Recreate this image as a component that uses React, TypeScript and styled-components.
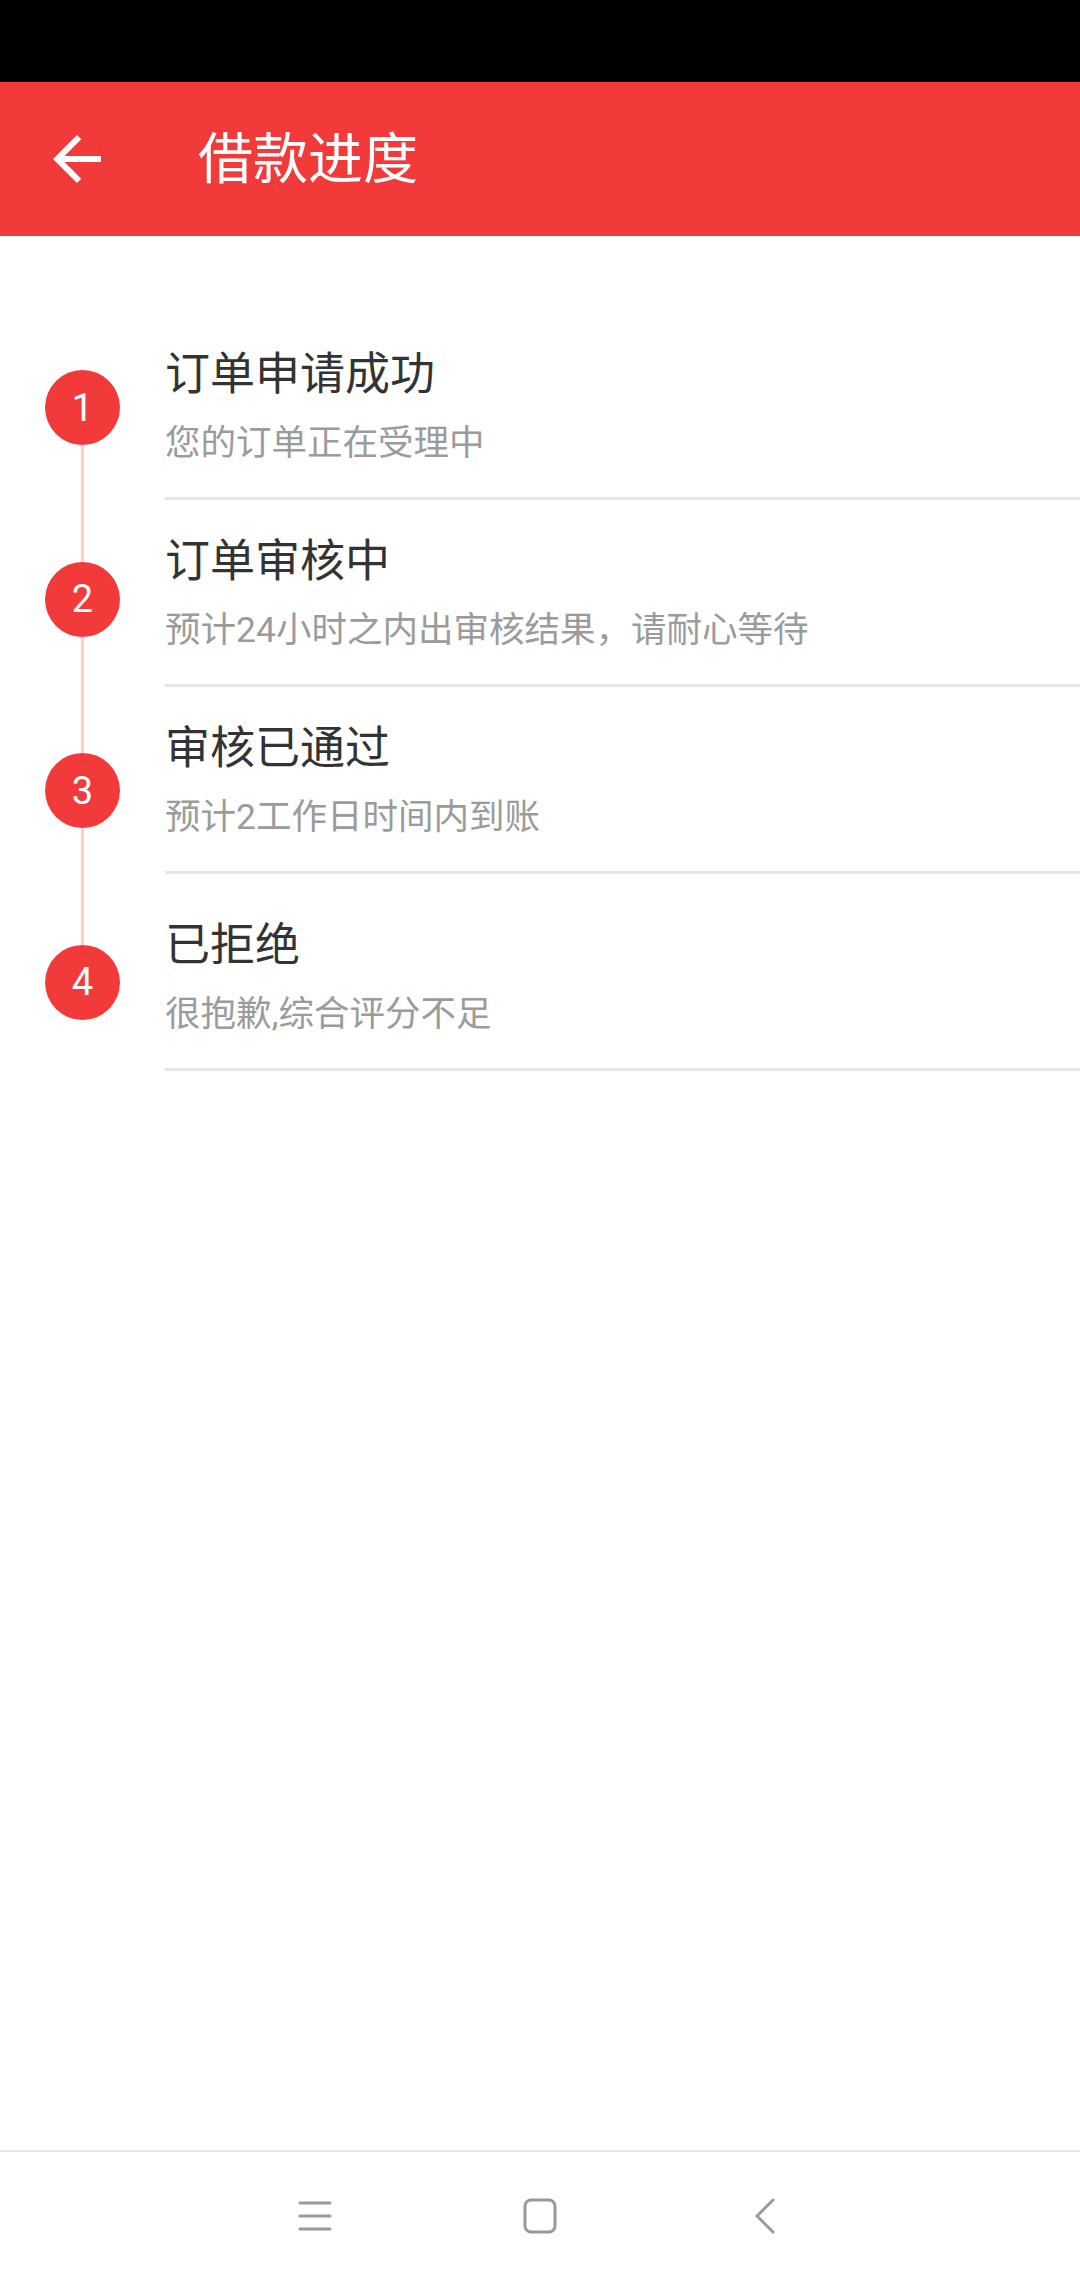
import * as React from 'react';
import styled, { createGlobalStyle } from 'styled-components';

// ========================
// Data
// ========================

interface IStep {
  title: string;
  desc: string;
}

const steps: IStep[] = [
  { title: '订单申请成功', desc: '您的订单正在受理中' },
  { title: '订单审核中', desc: '预计24小时之内出审核结果，请耐心等待' },
  { title: '审核已通过', desc: '预计2工作日时间内到账' },
  { title: '已拒绝', desc: '很抱歉,综合评分不足' },
];

const red = '#f23a3a';
const railColor = '#f9d3c3';

// ========================
// Components
// ========================

const GlobalStyle = createGlobalStyle`
  html, body {
    margin: 0;
    padding: 0;
    background: #ffffff;
  }
  body {
    font-family: Roboto, "Noto Sans CJK SC", "Noto Sans", sans-serif;
  }
`;

const Page = styled.div`
  width: 1080px;
  height: 2280px;
  display: flex;
  flex-direction: column;
  background: #ffffff;
  overflow: hidden;
`;

const StatusBar = styled.div`
  height: 82px;
  flex-shrink: 0;
  background: #000000;
`;

const Header = styled.header`
  height: 154px;
  flex-shrink: 0;
  display: flex;
  align-items: center;
  background: ${red};
  padding-left: 41px;
`;

const BackButton = styled.div`
  width: 72px;
  height: 72px;
  display: flex;
  align-items: center;
  justify-content: center;
`;

const HeaderTitle = styled.h1`
  margin: 0 0 0 85px;
  font-size: 55px;
  font-weight: 400;
  line-height: 1;
  color: #ffffff;
`;

const Content = styled.main`
  flex: 1;
  padding-top: 77px;
`;

const StepList = styled.ul`
  list-style: none;
  margin: 0;
  padding: 0;
`;

const StepRow = styled.li`
  display: flex;
`;

const Rail = styled.div`
  width: 165px;
  flex-shrink: 0;
  display: flex;
  flex-direction: column;
  align-items: center;
`;

const RailLine = styled.span<{ $hidden?: boolean; $height?: number }>`
  width: 3px;
  flex-shrink: 0;
  background: ${(p) => (p.$hidden ? 'transparent' : railColor)};
  ${(p) => (p.$height ? `height: ${p.$height}px;` : 'flex: 1;')}
`;

const StepBadge = styled.span`
  width: 75px;
  height: 75px;
  flex-shrink: 0;
  border-radius: 50%;
  background: ${red};
  color: #ffffff;
  font-size: 38px;
  display: flex;
  align-items: center;
  justify-content: center;
`;

const StepBody = styled.div<{ $top: number }>`
  flex: 1;
  padding: ${(p) => p.$top}px 0 32px;
  border-bottom: 3px solid #e8e8e8;
`;

const StepTitle = styled.div`
  font-size: 45px;
  line-height: 48px;
  color: #333333;
`;

const StepDesc = styled.div`
  margin-top: 22px;
  font-size: 35.5px;
  line-height: 44px;
  color: #9b9b9b;
`;

const NavBar = styled.nav`
  height: 128px;
  flex-shrink: 0;
  border-top: 2px solid #e8e8e8;
  display: flex;
  align-items: center;
  justify-content: center;
  gap: 165px;
`;

const NavKey = styled.div`
  width: 60px;
  height: 60px;
  display: flex;
  align-items: center;
  justify-content: center;
`;

// ========================
// Icons
// ========================

const ArrowBackIcon = () => (
  <svg width="72" height="72" viewBox="0 0 24 24">
    <path fill="#ffffff" d="M20 11H7.83l5.59-5.59L12 4l-8 8 8 8 1.41-1.41L7.83 13H20v-2z" />
  </svg>
);

const MenuIcon = () => (
  <svg width="36" height="36" viewBox="0 0 36 36" fill="none" stroke="#999999" strokeWidth="3" strokeLinecap="round">
    <line x1="3" y1="5" x2="33" y2="5" />
    <line x1="3" y1="18" x2="33" y2="18" />
    <line x1="3" y1="31" x2="33" y2="31" />
  </svg>
);

const HomeIcon = () => (
  <svg width="36" height="36" viewBox="0 0 36 36" fill="none" stroke="#999999" strokeWidth="3">
    <rect x="3" y="2" width="30" height="32" rx="6" />
  </svg>
);

const BackKeyIcon = () => (
  <svg width="36" height="36" viewBox="0 0 36 36" fill="none" stroke="#999999" strokeWidth="3" strokeLinecap="round" strokeLinejoin="round">
    <polyline points="26,2 10,18 26,34" />
  </svg>
);

// ========================
// App
// ========================

const App = () => {
  return (
    <Page>
      <GlobalStyle />
      <StatusBar />
      <Header>
        <BackButton>
          <ArrowBackIcon />
        </BackButton>
        <HeaderTitle>借款进度</HeaderTitle>
      </Header>

      <Content>
        <StepList>
          {steps.map((step, index) => {
            const isFirst = index === 0;
            const isLast = index === steps.length - 1;
            const top = isLast ? 48 : 38;
            // the badges sit on a slightly wider pitch than the rows
            const lead = 57 + index * 4.5;
            return (
              <StepRow key={index}>
                <Rail>
                  <RailLine $hidden={isFirst} $height={lead} />
                  <StepBadge>{index + 1}</StepBadge>
                  <RailLine $hidden={isLast} />
                </Rail>
                <StepBody $top={top}>
                  <StepTitle>{step.title}</StepTitle>
                  <StepDesc>{step.desc}</StepDesc>
                </StepBody>
              </StepRow>
            );
          })}
        </StepList>
      </Content>

      <NavBar>
        <NavKey>
          <MenuIcon />
        </NavKey>
        <NavKey>
          <HomeIcon />
        </NavKey>
        <NavKey>
          <BackKeyIcon />
        </NavKey>
      </NavBar>
    </Page>
  );
};

export default App;
